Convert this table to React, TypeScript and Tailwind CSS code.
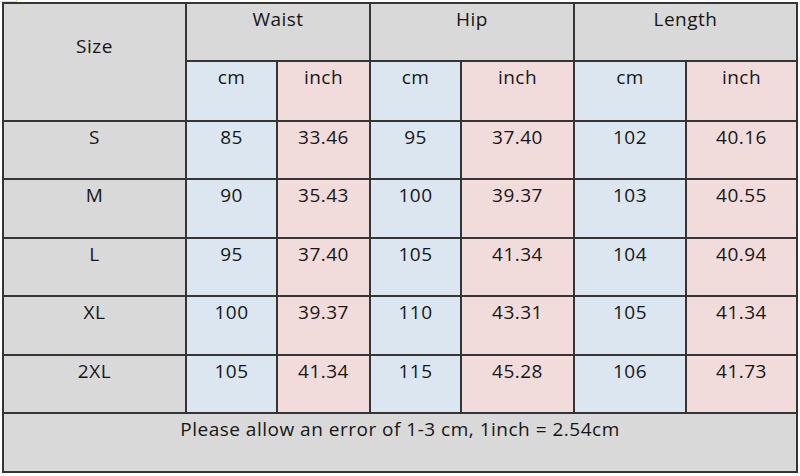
import React from "react";

const rows = [
  ["S", "85", "33.46", "95", "37.40", "102", "40.16"],
  ["M", "90", "35.43", "100", "39.37", "103", "40.55"],
  ["L", "95", "37.40", "105", "41.34", "104", "40.94"],
  ["XL", "100", "39.37", "110", "43.31", "105", "41.34"],
  ["2XL", "105", "41.34", "115", "45.28", "106", "41.73"],
];

const bgFor = (i: number) =>
  i === 0 ? "bg-[#d9d9d9]" : i % 2 === 1 ? "bg-[#dce6f1]" : "bg-[#f2dcdb]";

export default function App() {
  return (
    <div
      className="relative w-[800px] h-[476px] bg-white text-[#161616] overflow-hidden"
      style={{ fontFamily: "'Open Sans', sans-serif" }}
    >
      <div className="absolute left-0 top-0 w-[17px] h-[2px] border-b border-r border-[#e8d9a0]" />
      <div className="ml-[2px] mt-[2px] inline-grid bg-[#353535] p-[2px] gap-[2px] grid-cols-[181px_89px_91px_89px_111px_110px_109px] grid-rows-[56px_58px_56px_57px_56px_57px_56px_57px] text-[19px] leading-[24px] tracking-[0.5px]">
        <div className="row-span-2 bg-[#d9d9d9] text-center pt-[30px]">Size</div>
        <div className="col-span-2 bg-[#d9d9d9] text-center pt-[3px]">Waist</div>
        <div className="col-span-2 bg-[#d9d9d9] text-center pt-[3px]">Hip</div>
        <div className="col-span-2 bg-[#d9d9d9] text-center pt-[3px]">Length</div>
        <div className="bg-[#dce6f1] text-center pt-[3px]">cm</div>
        <div className="bg-[#f2dcdb] text-center pt-[3px]">inch</div>
        <div className="bg-[#dce6f1] text-center pt-[3px]">cm</div>
        <div className="bg-[#f2dcdb] text-center pt-[3px]">inch</div>
        <div className="bg-[#dce6f1] text-center pt-[3px]">cm</div>
        <div className="bg-[#f2dcdb] text-center pt-[3px]">inch</div>
        {rows.map((r) =>
          r.map((v, i) => (
            <div key={r[0] + i} className={`${bgFor(i)} text-center pt-[3px]`}>
              {v}
            </div>
          ))
        )}
        <div className="col-span-7 bg-[#d9d9d9] text-center pt-[3px]">
          Please allow an error of 1-3 cm, 1inch = 2.54cm
        </div>
      </div>
    </div>
  );
}
